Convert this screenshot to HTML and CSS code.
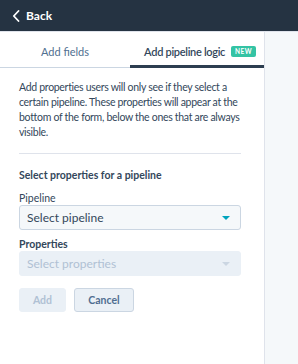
FILE: index.html
```html
<!DOCTYPE html>
<html>
<head>
    <link rel="stylesheet" href="styles.css">
</head>
<body>
    <header class="topbar">
        <a class="back">
            <svg width="8" height="12" viewBox="0 0 8 12"><path d="M6.5 1 L1.8 6 L6.5 11" fill="none" stroke="#fff" stroke-width="1.8" stroke-linecap="round" stroke-linejoin="round"/></svg>
            Back
        </a>
    </header>
    <div class="layout">
        <main class="panel">
            <nav class="tabs">
                <div class="tab">Add fields</div>
                <div class="tab active">Add pipeline logic <span class="badge">NEW</span></div>
            </nav>
            <div class="content">
                <p class="intro">Add properties users will only see if they select a certain pipeline. These properties will appear at the bottom of the form, below the ones that are always visible.</p>
                <hr class="divider">
                <h3 class="section-title">Select properties for a pipeline</h3>
                <label class="field-label">Pipeline</label>
                <div class="select">
                    <span>Select pipeline</span>
                    <span class="caret"></span>
                </div>
                <label class="field-label bold">Properties</label>
                <div class="select disabled">
                    <span>Select properties</span>
                    <span class="caret"></span>
                </div>
                <div class="actions">
                    <button class="btn btn-add" disabled>Add</button>
                    <button class="btn btn-cancel">Cancel</button>
                </div>
            </div>
        </main>
        <aside class="side"></aside>
    </div>
</body>
</html>
```
FILE: styles.css
```css
* {
    box-sizing: border-box;
}
html, body {
    height: 100%;
}
body {
    margin: 0;
    font-family: Lato, "Liberation Sans", sans-serif;
    color: #33475b;
    display: flex;
    flex-direction: column;
    background: #fff;
}
.topbar {
    height: 32px;
    background: #253342;
    display: flex;
    align-items: center;
    padding-left: 12px;
    border-bottom: 1px solid #dfe3eb;
}
.back {
    color: #fff;
    font-weight: bold;
    font-size: 12px;
    display: flex;
    align-items: center;
    gap: 6px;
}
.layout {
    flex: 1;
    display: flex;
}
.panel {
    width: 265px;
    border-right: 1px solid #dfe3eb;
}
.side {
    flex: 1;
    background: #f5f8fa;
}
.tabs {
    display: flex;
    height: 36px;
}
.tab {
    flex: 1;
    display: flex;
    align-items: center;
    justify-content: center;
    font-size: 11px;
    color: #516f90;
    border-bottom: 1px solid #cbd6e2;
    padding-top: 4px;
}
.tab:first-child {
    flex: 0 0 130px;
}
.tab.active {
    color: #33475b;
    font-weight: 600;
    letter-spacing: -0.3px;
    border-bottom: 3px solid #2d3e50;
    padding-top: 6px;
    padding-left: 6px;
}
.badge {
    background: #34c3a4;
    color: #fff;
    font-size: 6.5px;
    font-weight: bold;
    letter-spacing: 0.4px;
    padding: 2px 4px;
    border-radius: 2px;
    margin-left: 6px;
}
.content {
    padding: 12px 23px 0 19px;
}
.intro {
    margin: 0;
    font-size: 10.5px;
    line-height: 15px;
    letter-spacing: -0.3px;
    color: #33475b;
}
.divider {
    border: 0;
    border-top: 1px solid #dfe3eb;
    margin: 13px 0 14px;
}
.section-title {
    margin: 0 0 8px;
    font-size: 10.5px;
    line-height: 15px;
    font-weight: bold;
}
.field-label {
    display: block;
    font-size: 10.5px;
    line-height: 14px;
    color: #33475b;
}
.field-label.bold {
    font-weight: bold;
    margin-top: 7px;
}
.select {
    height: 25px;
    background: #f5f8fa;
    border: 1px solid #cbd6e2;
    border-radius: 3px;
    display: flex;
    align-items: center;
    justify-content: space-between;
    padding: 0 10px 0 7px;
    font-size: 12px;
    color: #33475b;
}
.caret {
    width: 0;
    height: 0;
    border-left: 4px solid transparent;
    border-right: 4px solid transparent;
    border-top: 4px solid #00a4bd;
}
.select.disabled {
    background: #eaf0f6;
    border-color: #eaf0f6;
    color: #b0c1d4;
}
.select.disabled .caret {
    border-top-color: #cbd6e2;
}
.actions {
    display: flex;
    gap: 8px;
    margin-top: 12px;
}
.btn {
    height: 24px;
    border-radius: 3px;
    font-family: inherit;
    font-size: 10.5px;
    font-weight: bold;
    border: 1px solid #cbd6e2;
    background: #eaf0f6;
    color: #506e91;
}
.btn-add {
    width: 47px;
    border-color: #eaf0f6;
    color: #b0c1d4;
}
.btn-cancel {
    width: 60px;
}
```
